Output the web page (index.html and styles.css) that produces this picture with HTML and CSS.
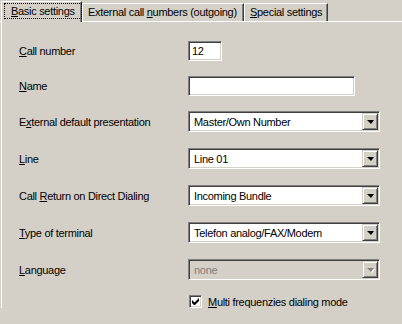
FILE: index.html
```html
<!DOCTYPE html>
<html lang="en">
<head>
  <meta charset="UTF-8">
  <title>Basic settings</title>
  <link rel="stylesheet" href="styles.css">
</head>
<body>
  <div class="tabs">
    <div class="tab active"><span class="focus"><u>B</u>asic settings</span></div>
    <div class="tab ext">External call <u>n</u>umbers (outgoing)</div>
    <div class="tab spec"><u>S</u>pecial settings</div>
  </div>
  <div class="panel">
    <div class="row text-row">
      <div class="label"><u>C</u>all number</div>
      <div class="edit short">12</div>
    </div>
    <div class="row text-row">
      <div class="label"><u>N</u>ame</div>
      <div class="edit long"></div>
    </div>
    <div class="row">
      <div class="label">E<u>x</u>ternal default presentation</div>
      <div class="combo"><span class="value">Master/Own Number</span><span class="drop"><i class="arrow"></i></span></div>
    </div>
    <div class="row">
      <div class="label"><u>L</u>ine</div>
      <div class="combo"><span class="value">Line 01</span><span class="drop"><i class="arrow"></i></span></div>
    </div>
    <div class="row">
      <div class="label">Call <u>R</u>eturn on Direct Dialing</div>
      <div class="combo"><span class="value">Incoming Bundle</span><span class="drop"><i class="arrow"></i></span></div>
    </div>
    <div class="row">
      <div class="label"><u>T</u>ype of terminal</div>
      <div class="combo"><span class="value">Telefon analog/FAX/Modem</span><span class="drop"><i class="arrow"></i></span></div>
    </div>
    <div class="row">
      <div class="label"><u>L</u>anguage</div>
      <div class="combo disabled"><span class="value">none</span><span class="drop"><i class="arrow"></i></span></div>
    </div>
    <div class="row check-row">
      <div class="label"></div>
      <span class="checkbox">
        <svg width="7" height="7" viewBox="0 0 7 7"><path d="M0 2v3l2 2h1l4-4V0L2.5 4.5z" fill="#000"/></svg>
      </span>
      <span class="check-text"><u>M</u>ulti frequenzies dialing mode</span>
    </div>
  </div>
</body>
</html>
```
FILE: styles.css
```css
body {
  margin: 0;
  background: #d4d0c8;
  font-family: "Liberation Sans", Arial, sans-serif;
  font-size: 11px;
  letter-spacing: -0.3px;
  color: #000;
  overflow: hidden;
}
u {
  text-decoration: underline;
  text-underline-offset: 1px;
}
.tabs {
  display: flex;
  align-items: flex-end;
  height: 21px;
  border-bottom: 1px solid #fff;
  padding-left: 1px;
}
.tab {
  box-sizing: border-box;
  height: 18px;
  padding: 2px 0 0 5px;
  border-left: 1px solid #fff;
  border-top: 1px solid #fff;
  border-right: 1px solid #404040;
  box-shadow: inset -1px 0 #808080;
  white-space: nowrap;
}
.tab.active {
  width: 81px;
  height: 21px;
  margin-bottom: -1px;
  padding: 2px 0 0 3px;
  background: #d4d0c8;
  position: relative;
  z-index: 1;
}
.focus {
  display: inline-block;
  width: 76px;
  box-sizing: border-box;
  padding: 1px 0 1px 6px;
  outline: 1px dotted #000;
}
.tab.ext {
  width: 162px;
}
.tab.spec {
  width: 84px;
}
.panel {
  border-left: 1px solid #fff;
  margin-left: 1px;
  padding: 19px 0 0 17px;
}
.row {
  display: flex;
  align-items: center;
  height: 21px;
  margin-bottom: 16px;
}
.text-row {
  height: 20px;
  margin-bottom: 15px;
}
.label {
  width: 169px;
  flex: none;
}
.edit {
  box-sizing: border-box;
  height: 20px;
  background: #fff;
  border: 1px solid;
  border-color: #808080 #fff #fff #808080;
  box-shadow: inset 1px 1px #404040, inset -1px -1px #d4d0c8;
  padding: 3px 0 0 3px;
}
.edit.short {
  width: 34px;
}
.edit.long {
  width: 167px;
}
.combo {
  box-sizing: border-box;
  width: 192px;
  height: 21px;
  display: flex;
  align-items: center;
  background: #fff;
  border: 1px solid;
  border-color: #808080 #fff #fff #808080;
  box-shadow: inset 1px 1px #404040, inset -1px -1px #d4d0c8;
  padding: 1px;
}
.combo .value {
  flex: 1;
  padding-left: 4px;
}
.drop {
  box-sizing: border-box;
  width: 16px;
  height: 17px;
  background: #d4d0c8;
  border: 1px solid;
  border-color: #d4d0c8 #404040 #404040 #d4d0c8;
  box-shadow: inset 1px 1px #fff, inset -1px -1px #808080;
  display: flex;
  align-items: center;
  justify-content: center;
}
.arrow {
  width: 0;
  height: 0;
  border-left: 4px solid transparent;
  border-right: 3px solid transparent;
  border-top: 4px solid #000;
  margin-top: 1px;
}
.combo.disabled {
  background: #d4d0c8;
  color: #808080;
}
.combo.disabled .arrow {
  border-top-color: #808080;
  filter: drop-shadow(1px 1px 0 #fff);
}
.check-row {
  height: 13px;
  margin-top: -1px;
  margin-bottom: 0;
}
.checkbox {
  box-sizing: border-box;
  width: 13px;
  height: 13px;
  margin-left: 1px;
  background: #fff;
  border: 1px solid;
  border-color: #808080 #fff #fff #808080;
  box-shadow: inset 1px 1px #404040, inset -1px -1px #d4d0c8;
  display: flex;
  align-items: center;
  justify-content: center;
}
.check-text {
  margin-left: 6px;
}
```
